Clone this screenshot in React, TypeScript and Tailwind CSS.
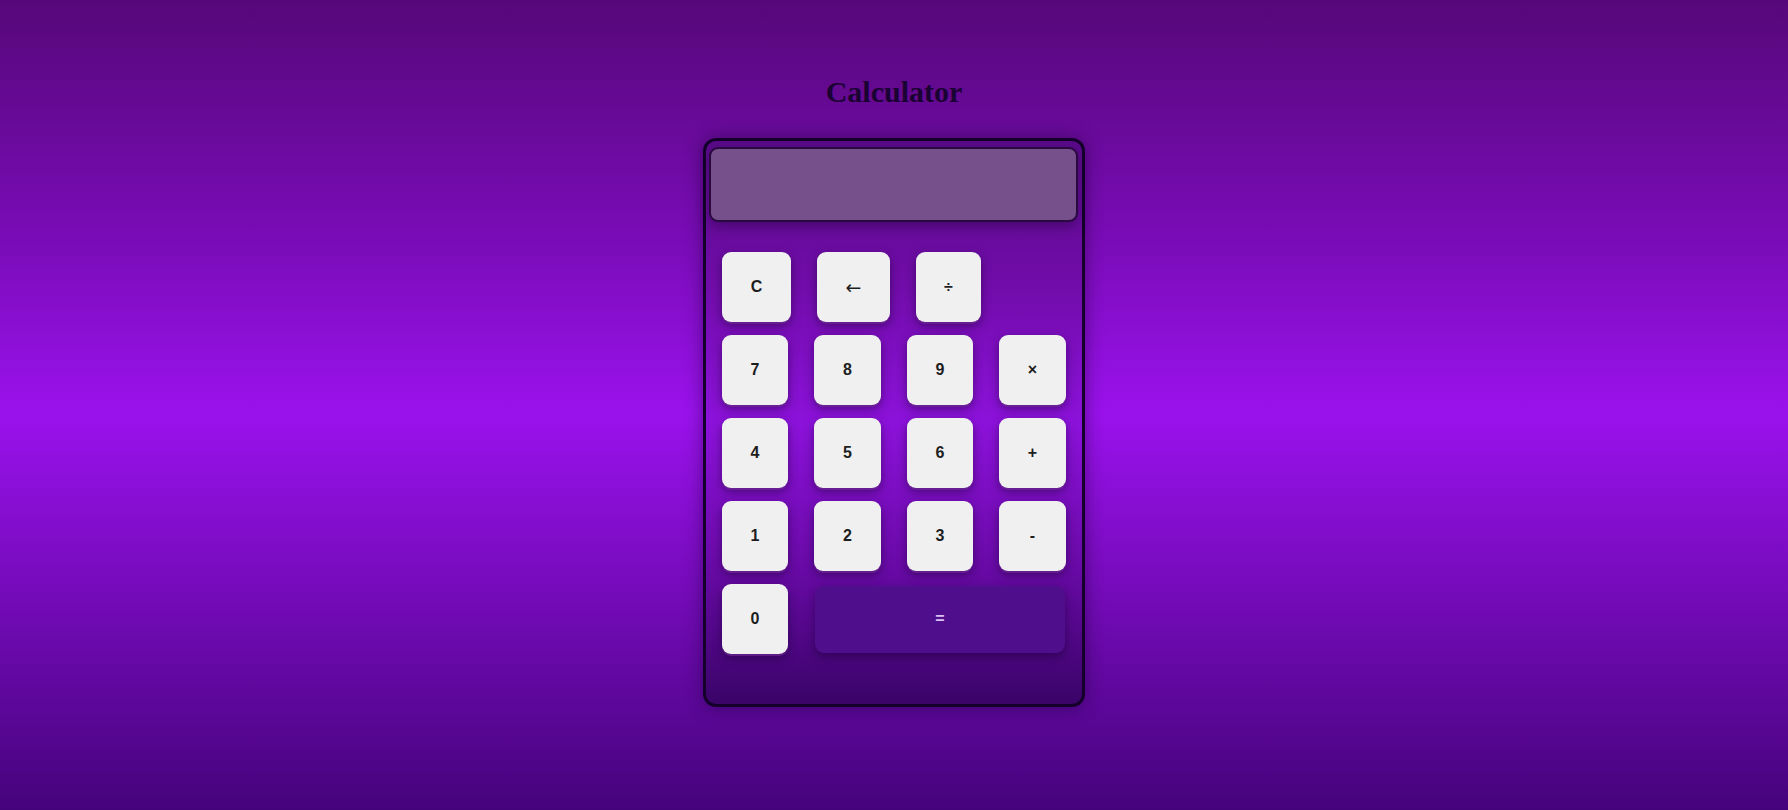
import React, { useState } from "react";

const keyBase =
  "h-[70px] rounded-[9px] bg-[#f0f0f0] text-[#1e1e1e] text-[16px] font-bold flex items-center justify-center shadow-[0_2px_0_rgba(110,40,150,0.7),0_4px_10px_rgba(25,0,50,0.5)]";

const Key: React.FC<{ label: string; w: string; onPress: (v: string) => void }> = ({
  label,
  w,
  onPress,
}) => (
  <button className={`${keyBase} ${w}`} onClick={() => onPress(label)}>
    {label}
  </button>
);

const App: React.FC = () => {
  const [value, setValue] = useState("");

  const press = (k: string) => {
    if (k === "C") return setValue("");
    if (k === "←") return setValue((v) => v.slice(0, -1));
    if (k === "=") {
      try {
        const expr = value.replace(/×/g, "*").replace(/÷/g, "/");
        // eslint-disable-next-line no-new-func
        setValue(String(Function(`return (${expr})`)()));
      } catch {
        setValue("Error");
      }
      return;
    }
    setValue((v) => v + k);
  };

  return (
    <div
      className="min-h-screen w-full flex flex-col items-center pt-[75px] bg-[linear-gradient(to_bottom,#560879_0%,#7a0cb8_30%,#9a12ec_51%,#7a0cc0_70%,#45037b_100%)]"
      style={{ fontFamily: '"Liberation Sans", Arial, sans-serif' }}
    >
      <h1
        className="text-[30px] leading-[34px] font-bold text-[#1a0233] mb-[29px]"
        style={{ fontFamily: '"Liberation Serif", "Times New Roman", serif' }}
      >
        Calculator
      </h1>

      <div className="w-[382px] border-[3px] border-[#14002a] rounded-[13px] px-[3px] pt-[6px] pb-[50px] bg-[linear-gradient(to_bottom,#5a0a88_0%,#700ca8_25%,#8c12da_50%,#6a0aa8_75%,#3a0468_100%)] shadow-[0_0_18px_rgba(20,0,40,0.45)]">
        {/* display */}
        <div className="h-[75px] w-[369px] rounded-[9px] border-2 border-[#2a0840] bg-[#76508a] shadow-[0_5px_12px_rgba(20,0,40,0.35)] flex items-center justify-end px-4 text-[28px] text-white overflow-hidden">
          {value}
        </div>

        <div className="mt-[30px] px-[13px] flex flex-col gap-[13px]">
          <div className="flex gap-[26px]">
            <Key label="C" w="w-[69px]" onPress={press} />
            <button
              className={`${keyBase} w-[73px]`}
              onClick={() => press("←")}
            >
              <span
                className="font-normal text-[19px] leading-none"
                style={{ fontFamily: '"DejaVu Sans", sans-serif' }}
              >
                ←
              </span>
            </button>
            <Key label="÷" w="w-[65px]" onPress={press} />
          </div>
          <div className="flex gap-[26px]">
            <Key label="7" w="w-[66px]" onPress={press} />
            <Key label="8" w="w-[67px]" onPress={press} />
            <Key label="9" w="w-[66px]" onPress={press} />
            <Key label="×" w="w-[67px]" onPress={press} />
          </div>
          <div className="flex gap-[26px]">
            <Key label="4" w="w-[66px]" onPress={press} />
            <Key label="5" w="w-[67px]" onPress={press} />
            <Key label="6" w="w-[66px]" onPress={press} />
            <Key label="+" w="w-[67px]" onPress={press} />
          </div>
          <div className="flex gap-[26px]">
            <Key label="1" w="w-[66px]" onPress={press} />
            <Key label="2" w="w-[67px]" onPress={press} />
            <Key label="3" w="w-[66px]" onPress={press} />
            <Key label="-" w="w-[67px]" onPress={press} />
          </div>
          <div className="flex gap-[26px] items-center">
            <Key label="0" w="w-[66px]" onPress={press} />
            <button
              className="h-[67px] w-[250px] ml-px rounded-[9px] bg-[#4f0f8c] text-[#dcc0f4] text-[16px] font-bold flex items-center justify-center shadow-[0_4px_10px_rgba(25,0,50,0.5)]"
              onClick={() => press("=")}
            >
              =
            </button>
          </div>
        </div>
      </div>
    </div>
  );
};

export default App;
